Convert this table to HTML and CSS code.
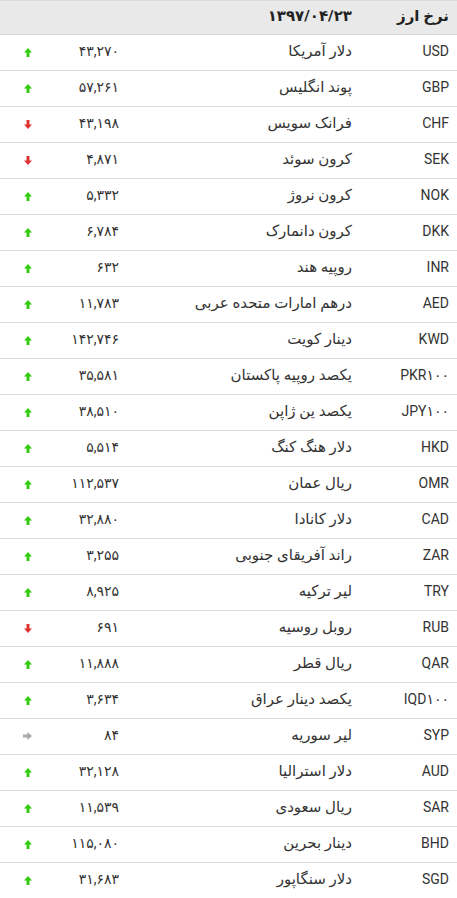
FILE: index.html
```html
<!DOCTYPE html>
<html lang="fa" dir="rtl">
<head>
<meta charset="utf-8">
<link rel="stylesheet" href="styles.css">
</head>
<body>
<table class="rates">
<colgroup><col class="c-code"><col class="c-name"><col class="c-val"><col class="c-dir"></colgroup>
<thead>
<tr><th class="code">نرخ ارز</th><th class="name">۱۳۹۷/۰۴/۲۳</th><th></th><th></th></tr>
</thead>
<tbody id="rows"></tbody>
</table>
<script>
var d=[
["USD","دلار آمریکا","۴۳,۲۷۰","u"],
["GBP","پوند انگلیس","۵۷,۲۶۱","u"],
["CHF","فرانک سویس","۴۳,۱۹۸","d"],
["SEK","کرون سوئد","۴,۸۷۱","d"],
["NOK","کرون نروژ","۵,۳۳۲","u"],
["DKK","کرون دانمارک","۶,۷۸۴","u"],
["INR","روپیه هند","۶۳۲","u"],
["AED","درهم امارات متحده عربی","۱۱,۷۸۳","u"],
["KWD","دینار کویت","۱۴۲,۷۴۶","u"],
["PKR۱۰۰","یکصد روپیه پاکستان","۳۵,۵۸۱","u"],
["JPY۱۰۰","یکصد ین ژاپن","۳۸,۵۱۰","u"],
["HKD","دلار هنگ کنگ","۵,۵۱۴","u"],
["OMR","ریال عمان","۱۱۲,۵۳۷","u"],
["CAD","دلار کانادا","۳۲,۸۸۰","u"],
["ZAR","راند آفریقای جنوبی","۳,۲۵۵","u"],
["TRY","لیر ترکیه","۸,۹۲۵","u"],
["RUB","روبل روسیه","۶۹۱","d"],
["QAR","ریال قطر","۱۱,۸۸۸","u"],
["IQD۱۰۰","یکصد دینار عراق","۳,۶۳۴","u"],
["SYP","لیر سوریه","۸۴","n"],
["AUD","دلار استرالیا","۳۲,۱۲۸","u"],
["SAR","ریال سعودی","۱۱,۵۳۹","u"],
["BHD","دینار بحرین","۱۱۵,۰۸۰","u"],
["SGD","دلار سنگاپور","۳۱,۶۸۳","u"]
];
var icons={
u:'<svg class="arr up" width="8" height="9" viewBox="0 0 8 9"><path d="M4 0L8 4.5H5.5V9H2.5V4.5H0Z"/></svg>',
d:'<svg class="arr down" width="8" height="9" viewBox="0 0 8 9"><path d="M2.5 0H5.5V4.5H8L4 9L0 4.5H2.5Z"/></svg>',
n:'<svg class="arr same" width="9" height="8" viewBox="0 0 9 8"><path d="M0 2.5H4.5V0L9 4L4.5 8V5.5H0Z"/></svg>'
};
var h="";
d.forEach(function(r){
h+='<tr><td class="code">'+r[0]+'</td><td class="name">'+r[1]+'</td><td class="val">'+r[2]+'</td><td class="dir">'+icons[r[3]]+'</td></tr>';
});
document.getElementById("rows").innerHTML=h;
</script>
</body>
</html>
```
FILE: styles.css
```css
html, body {
  margin: 0;
  padding: 0;
  background: #fff;
}
body {
  font-family: Roboto, "DejaVu Sans", sans-serif;
  font-size: 14px;
  color: #333;
}
.rates {
  width: 457px;
  border-collapse: collapse;
  table-layout: fixed;
  direction: rtl;
}
.c-code { width: 97px; }
.c-name { width: 233px; }
.c-val { width: 72px; }
.c-dir { width: 55px; }
.rates thead tr {
  background: #e9e9e9;
  border-top: 1px solid #d9d9d9;
  border-bottom: 1px solid #d6d6d6;
}
.rates th {
  height: 34px;
  box-sizing: border-box;
  padding: 0 8px 3px;
  line-height: 20px;
  font-weight: bold;
  font-size: 15px;
  color: #222;
  text-align: right;
  vertical-align: middle;
}
.rates tbody tr {
  border-bottom: 1px solid #dcdcdc;
}
.rates td {
  height: 36px;
  box-sizing: border-box;
  padding: 0 8px 3px;
  line-height: 20px;
  text-align: right;
  vertical-align: middle;
  white-space: nowrap;
}
.rates td.name {
  font-size: 15px;
}
.rates td.dir {
  text-align: center;
  padding: 0 0 3px;
}
.arr { display: inline-block; vertical-align: middle; }
.arr.up { fill: #33cc11; }
.arr.down { fill: #dd3333; }
.arr.same { fill: #a8a8a8; }
```
